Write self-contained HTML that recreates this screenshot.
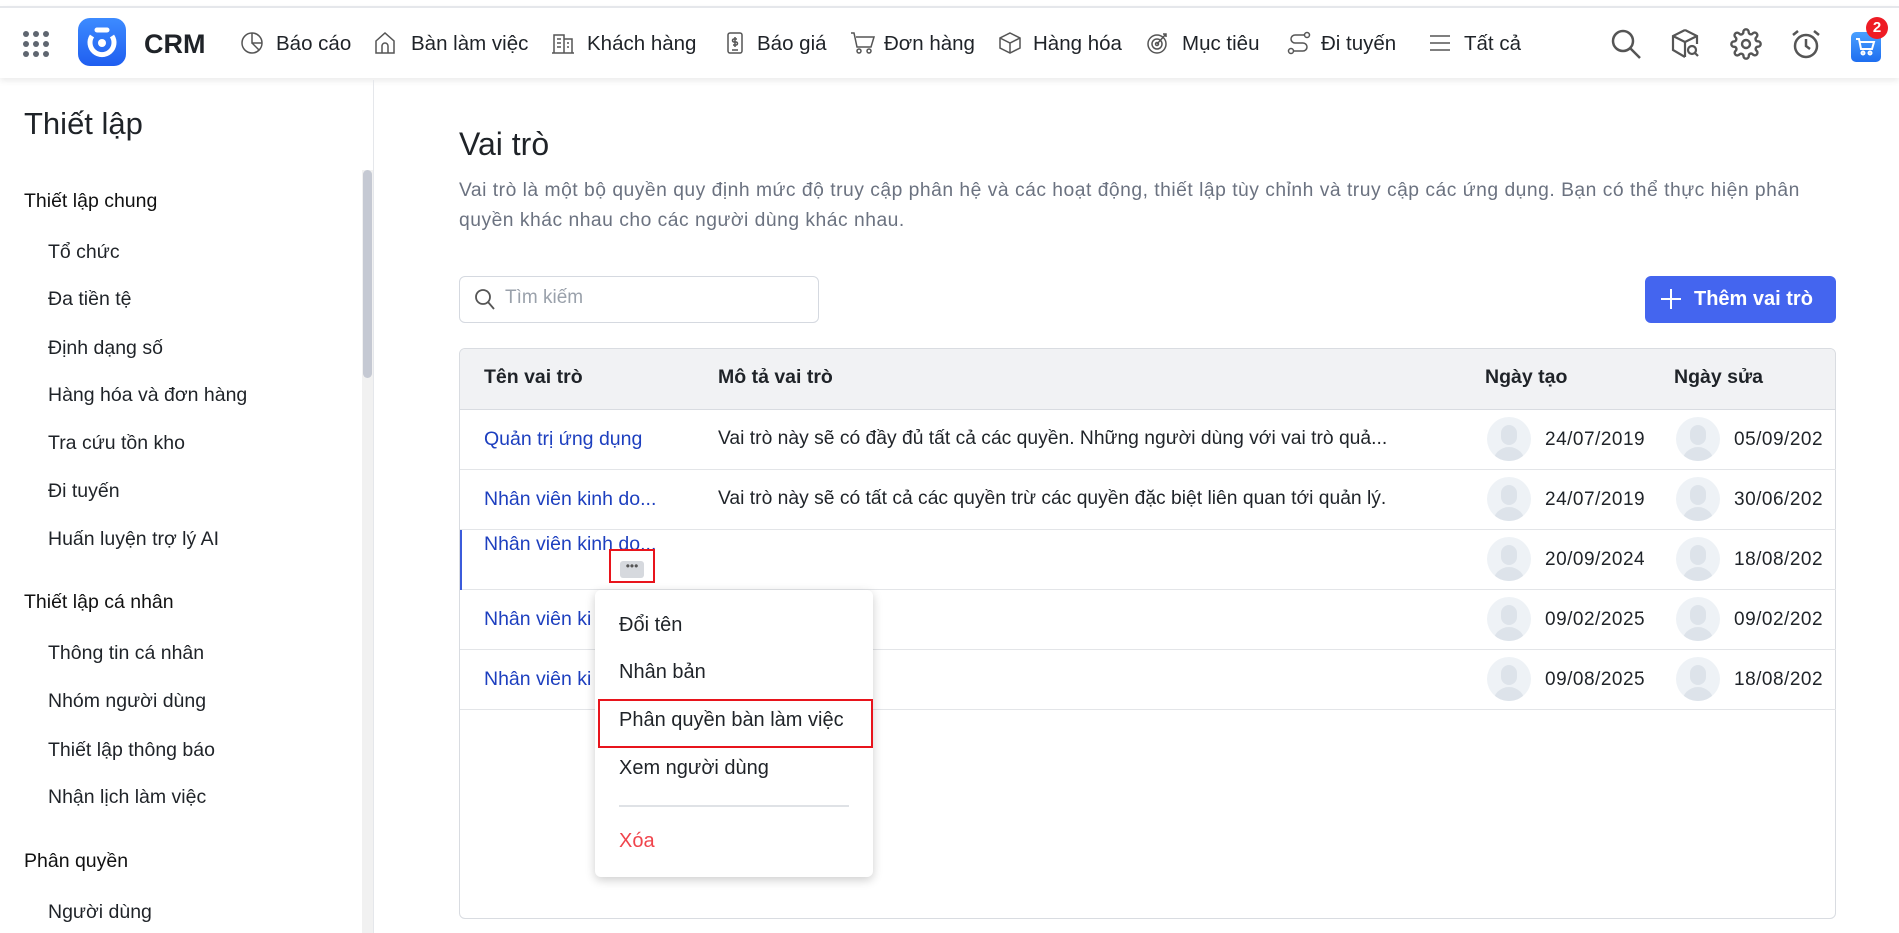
<!DOCTYPE html>
<html><head><meta charset="utf-8"><style>
*{box-sizing:border-box;margin:0;padding:0}
body{width:1899px;height:933px;overflow:hidden;background:#fff;font-family:"Liberation Sans","Noto Sans CJK SC",sans-serif;color:#1f2328;position:relative}
.a{position:absolute;white-space:nowrap}
.nav{position:absolute;left:0;top:6px;width:1899px;height:72px;background:#fff;border-top:2px solid #e5e7eb;box-shadow:0 3px 6px rgba(0,0,0,.08)}
.nt{font-size:20.5px;top:24px;color:#1f2328}
.ic{position:absolute;top:23px}
.sb{position:absolute;left:0;top:80px;width:374px;height:853px;border-right:1px solid #e5e7eb}
.si{font-size:19.5px;left:48px;color:#1f2328}
.sh{font-size:19.5px;left:24px;color:#111}
.th{font-size:19.5px;font-weight:bold;top:366px;color:#1f2328}
.row{position:absolute;left:460px;width:1376px;border-bottom:1.5px solid #e3e5e8}
.lk{font-size:19.5px;color:#1d3fbf;left:484px}
.ds{font-size:19.3px;left:718px;color:#1f2328}
.av{position:absolute;width:44px;height:44px;border-radius:50%;background:#eef2f6;overflow:hidden}
.av:before{content:"";position:absolute;left:14px;top:8px;width:16px;height:20px;border-radius:8px;background:#dde3ea}
.av:after{content:"";position:absolute;left:6px;top:30px;width:32px;height:22px;border-radius:16px 16px 0 0;background:#dde3ea}
.dt{font-size:19px;letter-spacing:.5px;color:#1f2328}
.mi{font-size:20px;left:619px;color:#1f2328}
</style></head><body>
<div class="nav">
 <svg class="a" style="left:22px;top:22px" width="28" height="28" viewBox="0 0 28 28" fill="#5f6670"><circle cx="4" cy="4" r="3"/><circle cx="14" cy="4" r="3"/><circle cx="24" cy="4" r="3"/><circle cx="4" cy="14" r="3"/><circle cx="14" cy="14" r="3"/><circle cx="24" cy="14" r="3"/><circle cx="4" cy="24" r="3"/><circle cx="14" cy="24" r="3"/><circle cx="24" cy="24" r="3"/></svg>
 <div class="a" style="left:78px;top:10px;width:48px;height:48px;border-radius:12px;background:linear-gradient(#3d8bff,#1f5ef0)"></div>
 <svg class="a" style="left:78px;top:10px" width="48" height="48" viewBox="0 0 48 48" fill="none" stroke="#fff" stroke-width="5"><path d="M14 18a12 12 0 1 0 20 0"/><circle cx="24" cy="25" r="4" fill="#fff" stroke="none"/><path d="M19 12h10" stroke-linecap="round"/></svg>
 <div class="a" style="left:144px;top:21px;font-size:27px;font-weight:bold">CRM</div>
 <svg class="ic" style="left:240px" width="24" height="24" viewBox="0 0 24 24" fill="none" stroke="#555" stroke-width="1.5"><circle cx="12" cy="12" r="10"/><path d="M12 2v10h10M12 12l7 7"/></svg>
 <div class="a nt" style="left:276px">Báo cáo</div>
 <svg class="ic" style="left:373px" width="24" height="24" viewBox="0 0 24 24" fill="none" stroke="#555" stroke-width="1.5"><path d="M3 10l9-8 9 8v12H3z"/><path d="M9 22v-7a3 3 0 0 1 6 0v7"/></svg>
 <div class="a nt" style="left:411px">Bàn làm việc</div>
 <svg class="ic" style="left:551px" width="24" height="24" viewBox="0 0 24 24" fill="none" stroke="#555" stroke-width="1.5"><path d="M3 22V4h10v18M13 8h8v14M1 22h22M6 8h4M6 12h4M6 16h4M16 12h2M16 16h2"/></svg>
 <div class="a nt" style="left:587px">Khách hàng</div>
 <svg class="ic" style="left:723px" width="24" height="24" viewBox="0 0 24 24" fill="none" stroke="#555" stroke-width="1.5"><rect x="5" y="2" width="14" height="20" rx="2"/><path d="M14 8h-3a1.5 1.5 0 0 0 0 3h2a1.5 1.5 0 0 1 0 3h-3M12 6v10M9 19h6"/></svg>
 <div class="a nt" style="left:757px">Báo giá</div>
 <svg class="ic" style="left:850px" width="26" height="24" viewBox="0 0 26 24" fill="none" stroke="#555" stroke-width="1.5"><path d="M1 2h3l3 14h14l3-10H6"/><circle cx="9" cy="20" r="2"/><circle cx="19" cy="20" r="2"/></svg>
 <div class="a nt" style="left:884px">Đơn hàng</div>
 <svg class="ic" style="left:998px" width="24" height="24" viewBox="0 0 24 24" fill="none" stroke="#555" stroke-width="1.5"><path d="M12 2l10 5v10l-10 5-10-5V7zM2 7l10 5 10-5M12 12v10"/></svg>
 <div class="a nt" style="left:1033px">Hàng hóa</div>
 <svg class="ic" style="left:1146px" width="24" height="24" viewBox="0 0 24 24" fill="none" stroke="#555" stroke-width="1.5"><circle cx="11" cy="13" r="9"/><circle cx="11" cy="13" r="5"/><circle cx="11" cy="13" r="1.5"/><path d="M11 13l9-10M17 3l3 0 0 3"/></svg>
 <div class="a nt" style="left:1182px">Mục tiêu</div>
 <svg class="ic" style="left:1287px" width="24" height="24" viewBox="0 0 24 24" fill="none" stroke="#555" stroke-width="1.5"><circle cx="4" cy="20" r="2.5"/><circle cx="20" cy="4" r="2.5"/><path d="M6.5 20H16a4 4 0 0 0 0-8H8a4 4 0 0 1 0-8h9"/></svg>
 <div class="a nt" style="left:1321px">Đi tuyến</div>
 <svg class="ic" style="left:1429px" width="22" height="24" viewBox="0 0 22 24" fill="none" stroke="#555" stroke-width="1.5"><path d="M1 5h20M1 12h20M1 19h20"/></svg>
 <div class="a nt" style="left:1464px">Tất cả</div>
 <svg class="a" style="left:1610px;top:20px" width="32" height="32" viewBox="0 0 32 32" fill="none" stroke="#555" stroke-width="2.5"><circle cx="13" cy="13" r="10"/><path d="M20.5 20.5L30 30"/></svg>
 <svg class="a" style="left:1670px;top:20px" width="30" height="32" viewBox="0 0 30 32" fill="none" stroke="#555" stroke-width="2.2"><path d="M15 2l12 6v8M15 2L3 8v14l12 7M3 8l12 6 12-6M15 14v15"/><circle cx="22" cy="22" r="4"/><path d="M25 25l3 3"/></svg>
 <svg class="a" style="left:1730px;top:20px" width="32" height="32" viewBox="0 0 24 24" fill="none" stroke="#555" stroke-width="1.8"><circle cx="12" cy="12" r="3"/><path d="M19.4 15a1.7 1.7 0 0 0 .3 1.8l.1.1a2 2 0 1 1-2.8 2.8l-.1-.1a1.7 1.7 0 0 0-1.8-.3 1.7 1.7 0 0 0-1 1.5V21a2 2 0 0 1-4 0v-.1a1.7 1.7 0 0 0-1.1-1.5 1.7 1.7 0 0 0-1.8.3l-.1.1a2 2 0 1 1-2.8-2.8l.1-.1a1.7 1.7 0 0 0 .3-1.8 1.7 1.7 0 0 0-1.5-1H3a2 2 0 0 1 0-4h.1a1.7 1.7 0 0 0 1.5-1.1 1.7 1.7 0 0 0-.3-1.8l-.1-.1a2 2 0 1 1 2.8-2.8l.1.1a1.7 1.7 0 0 0 1.8.3H9a1.7 1.7 0 0 0 1-1.5V3a2 2 0 0 1 4 0v.1a1.7 1.7 0 0 0 1 1.5 1.7 1.7 0 0 0 1.8-.3l.1-.1a2 2 0 1 1 2.8 2.8l-.1.1a1.7 1.7 0 0 0-.3 1.8V9a1.7 1.7 0 0 0 1.5 1H21a2 2 0 0 1 0 4h-.1a1.7 1.7 0 0 0-1.5 1z"/></svg>
 <svg class="a" style="left:1790px;top:20px" width="32" height="32" viewBox="0 0 32 32" fill="none" stroke="#555" stroke-width="2.5"><circle cx="16" cy="18" r="11"/><path d="M16 11v7l4 3M3 7l5-4M29 7l-5-4"/></svg>
 <div class="a" style="left:1851px;top:24px;width:30px;height:30px;border-radius:5px;background:linear-gradient(#4aa0ff,#1e6ef0)"></div>
 <svg class="a" style="left:1853px;top:27px" width="26" height="24" viewBox="0 0 26 24" fill="none" stroke="#fff" stroke-width="2"><path d="M3 4h3l2 10h11l2-7H7"/><circle cx="10" cy="18" r="1.5"/><circle cx="17" cy="18" r="1.5"/></svg>
 <div class="a" style="left:1866px;top:9px;width:22px;height:22px;border-radius:50%;background:#ee1c25;color:#fff;font-size:15px;font-weight:bold;text-align:center;line-height:22px">2</div>
</div>

<div class="sb">
 <div class="a" style="left:362px;top:90px;width:11px;height:763px;background:#f1f1f1"></div>
 <div class="a" style="left:363px;top:90px;width:9px;height:208px;border-radius:5px;background:#c5c9d3"></div>
</div>
<div class="a" style="left:24px;top:106px;font-size:31px;color:#1f2328">Thiết lập</div>
<div class="a sh" style="top:190px">Thiết lập chung</div>
<div class="a si" style="top:241px">Tổ chức</div>
<div class="a si" style="top:288px">Đa tiền tệ</div>
<div class="a si" style="top:337px">Định dạng số</div>
<div class="a si" style="top:384px">Hàng hóa và đơn hàng</div>
<div class="a si" style="top:432px">Tra cứu tồn kho</div>
<div class="a si" style="top:480px">Đi tuyến</div>
<div class="a si" style="top:528px">Huấn luyện trợ lý AI</div>
<div class="a sh" style="top:591px">Thiết lập cá nhân</div>
<div class="a si" style="top:642px">Thông tin cá nhân</div>
<div class="a si" style="top:690px">Nhóm người dùng</div>
<div class="a si" style="top:739px">Thiết lập thông báo</div>
<div class="a si" style="top:786px">Nhận lịch làm việc</div>
<div class="a sh" style="top:850px">Phân quyền</div>
<div class="a si" style="top:901px">Người dùng</div>

<div class="a" style="left:459px;top:126px;font-size:32px;color:#1f2328">Vai trò</div>
<div class="a" style="left:459px;top:176px;font-size:19.3px;letter-spacing:.5px;color:#6b7280;line-height:30px;white-space:normal;width:1372px">Vai trò là một bộ quyền quy định mức độ truy cập phân hệ và các hoạt động, thiết lập tùy chỉnh và truy cập các ứng dụng. Bạn có thể thực hiện phân quyền khác nhau cho các người dùng khác nhau.</div>

<div class="a" style="left:459px;top:276px;width:360px;height:47px;border:1px solid #d5d9e0;border-radius:6px"></div>
<svg class="a" style="left:474px;top:288px" width="22" height="24" viewBox="0 0 22 24" fill="none" stroke="#555" stroke-width="1.8"><circle cx="9" cy="9" r="7"/><path d="M14 14l6 7"/></svg>
<div class="a" style="left:505px;top:287px;font-size:19px;color:#9aa1ab">Tìm kiếm</div>
<div class="a" style="left:1645px;top:276px;width:191px;height:47px;border-radius:6px;background:#4465ef"></div>
<svg class="a" style="left:1660px;top:288px" width="22" height="22" viewBox="0 0 22 22" stroke="#fff" stroke-width="2"><path d="M11 1v20M1 11h20"/></svg>
<div class="a" style="left:1694px;top:288px;font-size:20px;color:#fff;font-weight:bold">Thêm vai trò</div>

<div class="a" style="left:459px;top:348px;width:1377px;height:571px;border:1px solid #d9dce1;border-radius:6px;overflow:hidden">
 <div style="height:61px;background:#f1f2f4;border-bottom:1.5px solid #d9dce1"></div>
</div>
<div class="a th" style="left:484px">Tên vai trò</div>
<div class="a th" style="left:718px">Mô tả vai trò</div>
<div class="a th" style="left:1485px">Ngày tạo</div>
<div class="a th" style="left:1674px">Ngày sửa</div>

<div class="row" style="top:409px;height:61px"></div>
<div class="row" style="top:470px;height:60px"></div>
<div class="row" style="top:530px;height:60px"></div>
<div class="row" style="top:590px;height:60px"></div>
<div class="row" style="top:650px;height:60px"></div>
<div class="a" style="left:460px;top:530px;width:1.5px;height:60px;background:#3b5bdb"></div>

<div class="a lk" style="top:428px">Quản trị ứng dụng</div>
<div class="a ds" style="top:428px">Vai trò này sẽ có đầy đủ tất cả các quyền. Những người dùng với vai trò quả...</div>
<div class="a lk" style="top:488px">Nhân viên kinh do...</div>
<div class="a ds" style="top:488px">Vai trò này sẽ có tất cả các quyền trừ các quyền đặc biệt liên quan tới quản lý.</div>
<div class="a lk" style="top:533px">Nhân viên kinh do...</div>
<div class="a lk" style="top:608px">Nhân viên ki</div>
<div class="a lk" style="top:668px">Nhân viên ki</div>

<div class="a" style="left:620px;top:561px;width:24px;height:17px;border-radius:3px;background:#d6d9de;font-size:12px;text-align:center;line-height:10px;color:#555">•••</div>
<div class="a" style="left:609px;top:549px;width:46px;height:34px;border:2.5px solid #e8141c"></div>

<div class="av" style="left:1487px;top:417px"></div><div class="a dt" style="left:1545px;top:429px">24/07/2019</div>
<div class="av" style="left:1676px;top:417px"></div><div class="a dt" style="left:1734px;top:429px">05/09/202</div>
<div class="av" style="left:1487px;top:477px"></div><div class="a dt" style="left:1545px;top:489px">24/07/2019</div>
<div class="av" style="left:1676px;top:477px"></div><div class="a dt" style="left:1734px;top:489px">30/06/202</div>
<div class="av" style="left:1487px;top:537px"></div><div class="a dt" style="left:1545px;top:549px">20/09/2024</div>
<div class="av" style="left:1676px;top:537px"></div><div class="a dt" style="left:1734px;top:549px">18/08/202</div>
<div class="av" style="left:1487px;top:597px"></div><div class="a dt" style="left:1545px;top:609px">09/02/2025</div>
<div class="av" style="left:1676px;top:597px"></div><div class="a dt" style="left:1734px;top:609px">09/02/202</div>
<div class="av" style="left:1487px;top:657px"></div><div class="a dt" style="left:1545px;top:669px">09/08/2025</div>
<div class="av" style="left:1676px;top:657px"></div><div class="a dt" style="left:1734px;top:669px">18/08/202</div>
<div class="a" style="left:1836px;top:348px;width:63px;height:585px;background:#fff"></div>

<div class="a" style="left:595px;top:590px;width:278px;height:287px;background:#fff;border-radius:6px;box-shadow:0 3px 10px rgba(0,0,0,.2)"></div>
<div class="a mi" style="top:614px">Đổi tên</div>
<div class="a mi" style="top:661px">Nhân bản</div>
<div class="a mi" style="top:709px">Phân quyền bàn làm việc</div>
<div class="a mi" style="top:757px">Xem người dùng</div>
<div class="a" style="left:619px;top:805px;width:230px;height:1.5px;background:#dfe2e6"></div>
<div class="a mi" style="top:830px;color:#f0444c">Xóa</div>
<div class="a" style="left:598px;top:699px;width:275px;height:49px;border:2.5px solid #e8141c"></div>
</body></html>
